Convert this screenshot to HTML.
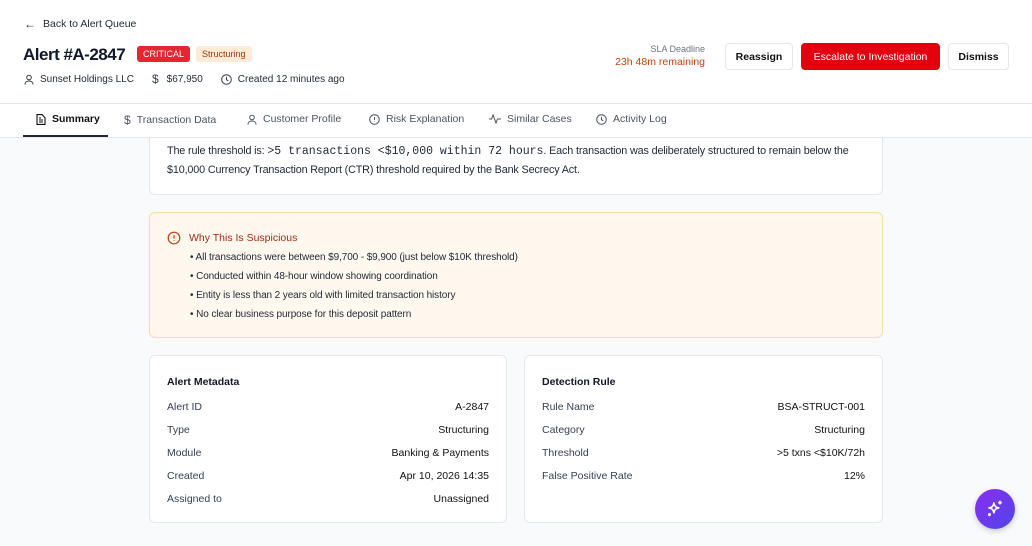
<!DOCTYPE html>
<html><head><meta charset="utf-8"><style>
*{box-sizing:border-box;margin:0;padding:0}
body{width:1032px;height:546px;overflow:hidden;background:#f9fafb;font-family:"Liberation Sans",sans-serif;color:#111827;position:relative;font-size:11px}
.hdr{position:absolute;left:0;top:0;width:1032px;height:138px;background:#fff;border-bottom:1px solid #e5e7eb;z-index:2}
.abs{position:absolute}
.btn{position:absolute;top:43px;height:27px;border:1px solid #e5e7eb;border-radius:4px;background:#fff;font-size:10.5px;font-weight:bold;display:flex;align-items:center;justify-content:center;color:#111}
.tab{position:absolute;top:113px;font-size:10.5px;color:#4b5563;display:flex;align-items:center;gap:6px}
svg{display:block}
.card{position:absolute;background:#fff;border:1px solid #e5e7eb;border-radius:6px}
.row{position:absolute;left:17px;right:17px;display:flex;justify-content:space-between;font-size:10.5px;color:#374151}
.row b{font-weight:normal;color:#111}
</style></head><body>
<div class="hdr">
<div class="abs" style="left:24px;top:18px;font-size:10.5px;color:#1f2937;display:flex;align-items:center;gap:7px"><span style="font-size:12px;line-height:12px">←</span>Back to Alert Queue</div>
<div class="abs" style="left:23px;top:45px;font-size:17px;font-weight:bold;letter-spacing:-0.5px">Alert #A-2847</div>
<div class="abs" style="left:137px;top:46px;height:16px;padding:0 6px;background:#e5252f;color:#fff;font-size:9px;border-radius:3px;line-height:16px">CRITICAL</div>
<div class="abs" style="left:196px;top:46px;height:16px;padding:0 6px;background:#fdebd6;color:#9a3412;font-size:9px;border-radius:3px;line-height:16px">Structuring</div>
<div class="abs" style="left:24px;top:72px;display:flex;align-items:center;gap:6px;font-size:10px;color:#1f2937">
<svg width="10" height="11" viewBox="0 0 10 11" fill="none" stroke="#374151" stroke-width="1"><circle cx="5" cy="3.5" r="2.3"/><path d="M1 10.5c0-2.3 1.8-3.5 4-3.5s4 1.2 4 3.5"/></svg>Sunset Holdings LLC
<span style="margin-left:12px;font-size:12px;color:#374151">$</span><span style="margin-left:2px">$67,950</span>
<svg style="margin-left:12px" width="11" height="11" viewBox="0 0 11 11" fill="none" stroke="#374151" stroke-width="1"><circle cx="5.5" cy="5.5" r="4.8"/><path d="M5.5 2.8v2.9l1.8 1.2"/></svg>Created 12 minutes ago</div>
<div class="abs" style="left:600px;top:44px;width:105px;text-align:right;font-size:9px;color:#6b7280">SLA Deadline</div>
<div class="abs" style="left:590px;top:56px;width:115px;text-align:right;font-size:10.5px;color:#c2410c">23h 48m remaining</div>
<div class="btn" style="left:725px;width:68px">Reassign</div>
<div class="btn" style="left:801px;width:139px;background:#e3000f;border-color:#e3000f;color:#fff;font-weight:normal">Escalate to Investigation</div>
<div class="btn" style="left:948px;width:61px">Dismiss</div>
<div class="abs" style="left:0;top:103px;width:1032px;border-top:1px solid #e5e7eb"></div>
<div class="tab" style="left:36px;color:#111;font-weight:bold"><svg width="10" height="11" viewBox="0 0 10 11" fill="none" stroke="#111" stroke-width="1.1"><path d="M1 .6h5l3 3v6.8H1z"/><path d="M3 6h4M3 8h4M3 4h2"/></svg>Summary</div>
<div class="abs" style="left:23px;top:135px;width:85px;height:2px;background:#1f2937"></div>
<div class="tab" style="left:124px"><span style="font-size:12px">$</span>Transaction Data</div>
<div class="tab" style="left:247px"><svg width="10" height="11" viewBox="0 0 10 11" fill="none" stroke="#4b5563" stroke-width="1"><circle cx="5" cy="3.5" r="2.3"/><path d="M1 10.5c0-2.3 1.8-3.5 4-3.5s4 1.2 4 3.5"/></svg>Customer Profile</div>
<div class="tab" style="left:369px"><svg width="11" height="11" viewBox="0 0 11 11" fill="none" stroke="#4b5563" stroke-width="1"><circle cx="5.5" cy="5.5" r="4.8"/><path d="M5.5 3v3M5.5 7.5v.5"/></svg>Risk Explanation</div>
<div class="tab" style="left:489px"><svg width="12" height="10" viewBox="0 0 12 10" fill="none" stroke="#4b5563" stroke-width="1"><path d="M0 5h2.5l1.5-4 3 8 1.5-4H12"/></svg>Similar Cases</div>
<div class="tab" style="left:596px"><svg width="11" height="11" viewBox="0 0 11 11" fill="none" stroke="#4b5563" stroke-width="1"><circle cx="5.5" cy="5.5" r="4.8"/><path d="M5.5 2.8v2.9l1.8 1.2"/></svg>Activity Log</div>
</div>
<div class="card" style="left:149px;top:130px;width:734px;height:65px;border-top:none;border-radius:0 0 6px 6px"></div>
<div class="abs" style="left:167px;top:142px;width:700px;font-size:10.8px;line-height:18px;color:#1f2937;letter-spacing:-0.15px">The rule threshold is: <span style="font-family:'Liberation Mono',monospace;font-size:11.5px;letter-spacing:0">&gt;5 transactions &lt;$10,000 within 72 hours</span>. Each transaction was deliberately structured to remain below the $10,000 Currency Transaction Report (CTR) threshold required by the Bank Secrecy Act.</div>
<div class="card" style="left:149px;top:212px;width:734px;height:126px;background:#fff8ee;border-color:#f8dcb0"></div>
<div class="abs" style="left:167px;top:231px;display:flex;align-items:center;gap:8px;font-size:10.5px;color:#9a2a12"><svg width="14" height="14" viewBox="0 0 14 14" fill="none" stroke="#c2410c" stroke-width="1.2"><circle cx="7" cy="7" r="5.8"/><path d="M7 4v3.5M7 9.3v.6"/></svg>Why This Is Suspicious</div>
<div class="abs" style="left:190px;top:248px;font-size:10px;line-height:19px;color:#1f2937;letter-spacing:-0.1px">
<div>• All transactions were between $9,700 - $9,900 (just below $10K threshold)</div>
<div>• Conducted within 48-hour window showing coordination</div>
<div>• Entity is less than 2 years old with limited transaction history</div>
<div>• No clear business purpose for this deposit pattern</div></div>
<div class="card" style="left:149px;top:355px;width:358px;height:168px">
<div class="abs" style="left:17px;top:20px;font-size:10.5px;font-weight:bold">Alert Metadata</div>
<div class="row" style="top:45px"><span>Alert ID</span><b>A-2847</b></div>
<div class="row" style="top:68px"><span>Type</span><b>Structuring</b></div>
<div class="row" style="top:91px"><span>Module</span><b>Banking &amp; Payments</b></div>
<div class="row" style="top:114px"><span>Created</span><b>Apr 10, 2026 14:35</b></div>
<div class="row" style="top:137px"><span>Assigned to</span><b>Unassigned</b></div>
</div>
<div class="card" style="left:524px;top:355px;width:359px;height:168px">
<div class="abs" style="left:17px;top:20px;font-size:10.5px;font-weight:bold">Detection Rule</div>
<div class="row" style="top:45px"><span>Rule Name</span><b>BSA-STRUCT-001</b></div>
<div class="row" style="top:68px"><span>Category</span><b>Structuring</b></div>
<div class="row" style="top:91px"><span>Threshold</span><b>&gt;5 txns &lt;$10K/72h</b></div>
<div class="row" style="top:114px"><span>False Positive Rate</span><b>12%</b></div>
</div>
<div class="abs" style="left:975px;top:489px;width:40px;height:40px;border-radius:50%;background:linear-gradient(135deg,#8b2cf5,#4f46e5);box-shadow:0 2px 6px rgba(0,0,0,.2);display:flex;align-items:center;justify-content:center">
<svg width="20" height="20" viewBox="0 0 18 18" fill="none" stroke="#fff" stroke-width="1.4" stroke-linejoin="round"><path d="M8 3.5c.6 3 1.5 4 4.5 4.5-3 .6-3.9 1.5-4.5 4.5-.6-3-1.5-3.9-4.5-4.5 3-.5 3.9-1.5 4.5-4.5z"/><path d="M13.5 1.5v3.5M11.8 3.2h3.4"/><circle cx="4" cy="14" r=".7"/></svg></div>
</body></html>
